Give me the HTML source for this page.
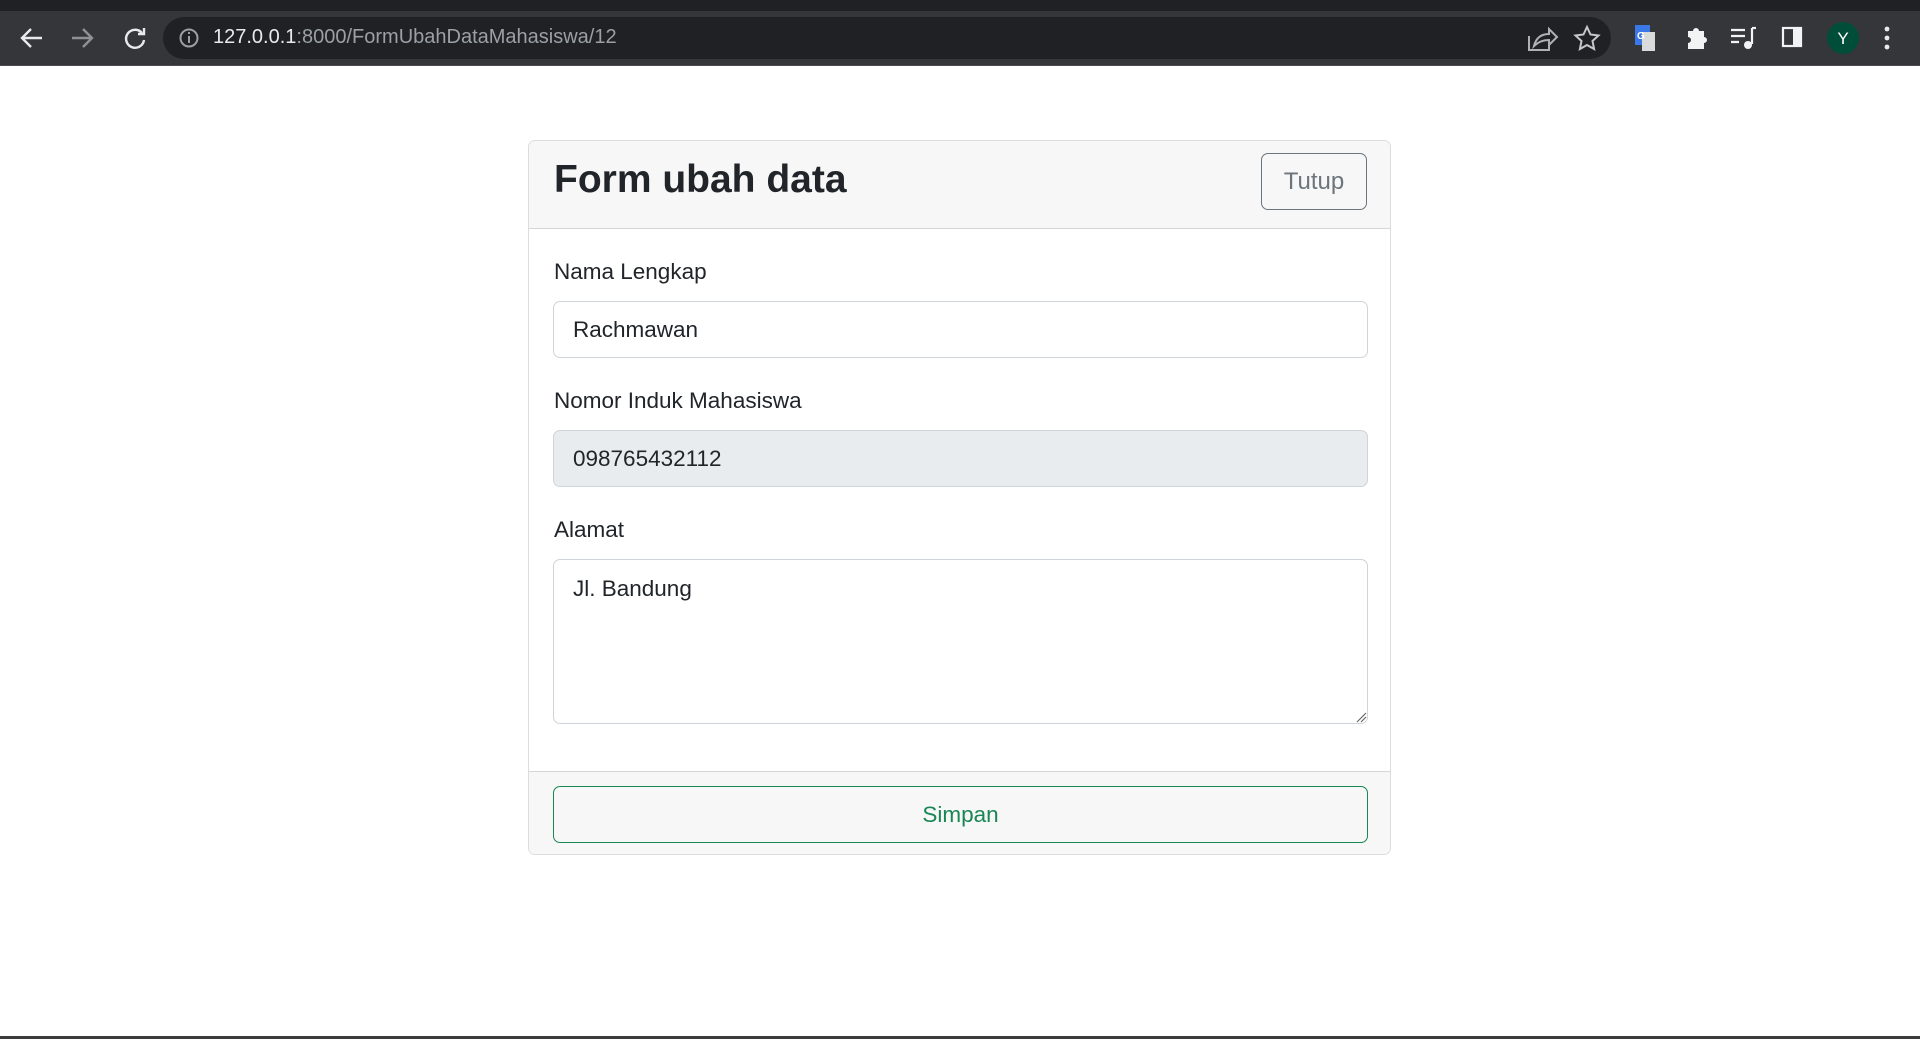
<!DOCTYPE html>
<html><head><meta charset="utf-8"><style>
*{box-sizing:border-box;margin:0;padding:0}
body{width:1920px;height:1039px;background:#fff;font-family:"Liberation Sans",sans-serif;position:relative;overflow:hidden;color:#212529}
.abs{position:absolute}
.tabs{left:0;top:0;width:1920px;height:12px;background:#202124}
.tb{left:0;top:11px;width:1920px;height:55px;background:#35363a;border-bottom:1px solid #4a4b4f}
.addr{left:163px;top:17px;width:1448px;height:42px;background:#202124;border-radius:21px}
.url{left:213px;top:26px;font-size:20px;color:#9aa0a6;white-space:nowrap}
.url b{color:#e8eaed;font-weight:normal}
.card{left:528px;top:140px;width:863px;height:715px;border:1px solid #dcdcdc;border-radius:7px;overflow:hidden}
.hdr{left:0;top:0;width:861px;height:88px;background:#f7f7f7;border-bottom:1px solid #d6d6d6}
.ftr{left:0;top:630px;width:861px;height:84px;background:#f7f7f7;border-top:1px solid #d6d6d6}
.title{left:25px;top:17px;font-size:39px;font-weight:bold;color:#212529}
.tutup{left:732px;top:12px;width:106px;height:57px;border:1px solid #6c757d;border-radius:7px;color:#6c757d;font-size:24px;display:flex;align-items:center;justify-content:center}
.lbl{font-size:22.5px;color:#212529;left:25px}
.inp{left:24px;width:815px;border:1px solid #ced4da;border-radius:7px;font-size:22.5px;padding-left:19px;display:flex;align-items:center}
.simpan{left:24px;top:14px;width:815px;height:57px;border:1px solid #198754;border-radius:7px;color:#198754;font-size:22.5px;display:flex;align-items:center;justify-content:center}
</style></head><body>
<div class="abs tabs"></div>
<div class="abs tb"></div>
<div class="abs addr"></div>
<svg class="abs" style="left:18px;top:24px" width="300" height="28" viewBox="0 0 300 28">
<g fill="none" stroke="#e8eaed" stroke-width="2.4">
<path d="M24 14H5M13 5l-9 9 9 9"/>
</g>
<g fill="none" stroke="#8e9195" stroke-width="2.4"><path d="M54 14h19M65 5l9 9-9 9"/></g>
<g fill="none" stroke="#e8eaed" stroke-width="2.4"><path d="M124 9a9 9 0 1 0 2 7"/><path d="M126 4v6h-6" /></g>
<circle cx="171" cy="14" r="8.5" fill="none" stroke="#9aa0a6" stroke-width="2"/><path d="M171 12v7M171 8v2" stroke="#9aa0a6" stroke-width="2"/>
</svg>
<div class="abs url"><b>127.0.0.1</b>:8000/FormUbahDataMahasiswa/12</div>
<svg class="abs" style="left:1520px;top:20px" width="380" height="36" viewBox="0 0 380 36">
<g fill="none" stroke="#aeb1b5" stroke-width="2"><path d="M9 16v14h20v-6"/><path d="M14 26c2-8 7-12 15-12v-5l8 8-8 8v-5c-6 0-11 2-15 6z"/></g>
<path d="M67 7l3.5 7.5 8 1-6 5.5 1.6 8L67 25l-7.1 4 1.6-8-6-5.5 8-1z" fill="none" stroke="#c4c7cb" stroke-width="2"/>
<rect x="115" y="5" width="15" height="20" fill="#3b78e7"/><rect x="122" y="12" width="13" height="19" fill="#d9dadc"/><text x="117" y="19" font-size="10" fill="#fff" font-family="Liberation Sans" font-weight="bold">G</text>
<path d="M168 11h5a3 3 0 0 1 6 0h5v6a3 3 0 0 1 0 6v6h-16v-6a3 3 0 0 0 0-6z" fill="#f1f3f4"/>
<g stroke="#f1f3f4" stroke-width="2.2"><path d="M211 10h14M211 16h14M211 22h8M232 8v16"/></g><circle cx="228" cy="25" r="4" fill="#f1f3f4"/><path d="M232 8h4" stroke="#f1f3f4" stroke-width="2.2"/>
<rect x="263" y="8" width="18" height="18" fill="none" stroke="#f1f3f4" stroke-width="2.2"/><rect x="273" y="8" width="8" height="18" fill="#f1f3f4"/>
<circle cx="323" cy="18" r="16" fill="#004d3a"/><text x="323" y="24" font-size="17" fill="#fff" text-anchor="middle" font-family="Liberation Sans">Y</text>
<g fill="#e8eaed"><circle cx="367" cy="9" r="2.4"/><circle cx="367" cy="18" r="2.4"/><circle cx="367" cy="27" r="2.4"/></g>
</svg>
<div class="abs card">
<div class="abs hdr"><div class="abs title">Form ubah data</div><div class="abs tutup">Tutup</div></div>
<div class="abs lbl" style="top:118px">Nama Lengkap</div>
<div class="abs inp" style="top:160px;height:57px">Rachmawan</div>
<div class="abs lbl" style="top:247px">Nomor Induk Mahasiswa</div>
<div class="abs inp" style="top:289px;height:57px;background:#e9ecef">098765432112</div>
<div class="abs lbl" style="top:376px">Alamat</div>
<div class="abs inp" style="top:418px;height:165px;align-items:flex-start;padding-top:16px">Jl. Bandung</div>
<svg class="abs" style="left:826px;top:570px" width="12" height="12"><path d="M2 11L11 2M6 11l5-5" stroke="#666" stroke-width="1.2"/></svg>
<div class="abs ftr"><div class="abs simpan">Simpan</div></div>
</div>
<div class="abs" style="left:0;top:1036px;width:1920px;height:3px;background:#3c3c3c"></div>
</body></html>
